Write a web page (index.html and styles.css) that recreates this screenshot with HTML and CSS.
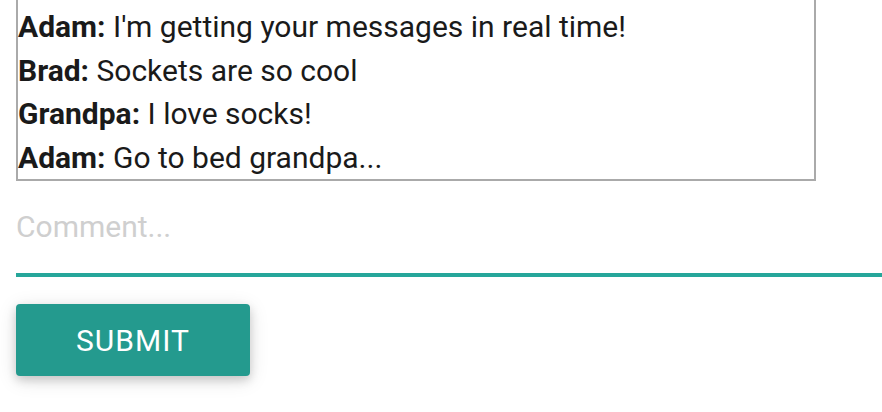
FILE: index.html
```html
<!DOCTYPE html>
<html>
<head>
<meta charset="utf-8">
<link rel="stylesheet" href="styles.css">
</head>
<body>
<div class="page">
  <div class="chat">
    <div class="msg"><b>Adam:</b> I'm getting your messages in real time!</div>
    <div class="msg"><b>Brad:</b> Sockets are so cool</div>
    <div class="msg"><b>Grandpa:</b> I love socks!</div>
    <div class="msg"><b>Adam:</b> Go to bed grandpa...</div>
  </div>
  <form class="form">
    <input class="comment" type="text" placeholder="Comment...">
    <button class="btn" type="button">Submit</button>
  </form>
</div>
</body>
</html>
```
FILE: styles.css
```css
html, body {
  margin: 0;
  padding: 0;
  background: #fff;
}
.page {
  padding: 0 0 40px 16px;
  font-family: Roboto, "Liberation Sans", sans-serif;
  font-size: 30px;
  line-height: 43.5px;
  color: #1a1a1a;
  overflow: hidden;
}
.chat {
  width: 796px;
  margin-top: -20px;
  padding-top: 23px;
  border: 2px solid #aaa;
  box-sizing: content-box;
}
.msg b {
  font-weight: 700;
}
.form {
  display: flex;
  flex-direction: column;
  align-items: flex-start;
}
.comment {
  display: block;
  width: 880px;
  height: 82px;
  margin: 4px 0 29px 0;
  padding: 0 0 6px 0;
  border: none;
  border-bottom: 2px solid #26a69a;
  box-shadow: 0 2px 0 0 #26a69a;
  outline: none;
  font-family: Roboto, "Liberation Sans", sans-serif;
  font-size: 30px;
  color: #1a1a1a;
  background: transparent;
  box-sizing: content-box;
}
.comment::placeholder {
  color: #cfcfcf;
}
.btn {
  height: 72px;
  padding: 0 60px;
  border: none;
  border-radius: 4px;
  background: #249a8e;
  color: #fff;
  font-family: Roboto, "Liberation Sans", sans-serif;
  font-size: 30px;
  letter-spacing: 1px;
  text-transform: uppercase;
  box-shadow: 0 4px 10px 0 rgba(0, 0, 0, 0.16), 0 4px 20px 0 rgba(0, 0, 0, 0.12);
  cursor: pointer;
}
```
